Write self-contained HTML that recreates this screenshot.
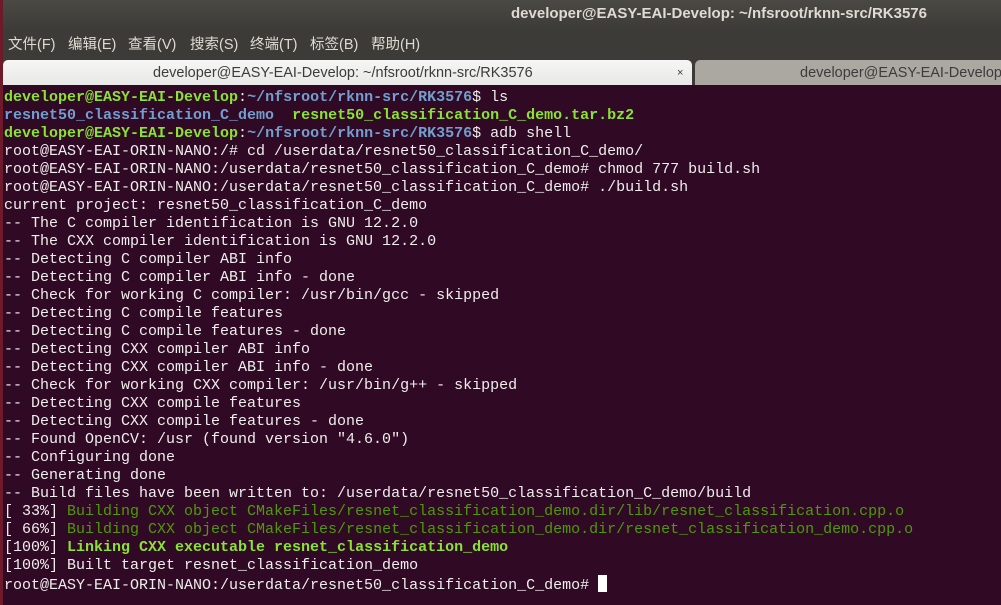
<!DOCTYPE html><html><head><meta charset="utf-8"><style>
body{margin:0;width:1001px;height:605px;overflow:hidden;background:#300a24;position:relative;font-family:"Liberation Sans","Noto Sans CJK SC",sans-serif}
#title{position:absolute;left:0;top:0;width:1001px;height:30px;background:linear-gradient(#4a4944,#3c3b37);color:#dfdbd2;font-weight:bold;font-size:15px;line-height:28px}
#title span{position:absolute;left:511px}
#menu{position:absolute;left:0;top:30px;width:1001px;height:30px;background:#3c3b37;color:#dfdbd2;font-size:14.5px;line-height:31px}
#menu span{position:absolute}
#tabs{position:absolute;left:0;top:59px;width:1001px;height:26px;background:#3c3b37}
.tab{position:absolute;top:1px;height:25px;border-radius:5px 5px 0 0;font-size:14.5px;line-height:26px}
#lb{position:absolute;left:0;top:0;width:3px;height:605px;background:#6e1a2a}
#term{position:absolute;left:4px;top:89px;font-family:"Liberation Mono",monospace;font-size:15px;line-height:18px;color:#eeeeec;white-space:pre}
.g{color:#8ae234;font-weight:bold}.b{color:#729fcf;font-weight:bold}.d{color:#4e9a06}
.cur{display:inline-block;width:9px;height:17px;background:#fff;vertical-align:-3px}
</style></head><body>
<div id="title"><span>developer@EASY-EAI-Develop: ~/nfsroot/rknn-src/RK3576</span></div>
<div id="menu"><span style="left:8px">文件(F)</span><span style="left:68px">编辑(E)</span><span style="left:128px">查看(V)</span><span style="left:190px">搜索(S)</span><span style="left:250px">终端(T)</span><span style="left:310px">标签(B)</span><span style="left:371px">帮助(H)</span></div>
<div id="tabs">
<div class="tab" style="left:3px;width:689px;background:linear-gradient(#f6f6f5,#e8e8e7);color:#3c3c3c"><span style="position:absolute;left:150px">developer@EASY-EAI-Develop: ~/nfsroot/rknn-src/RK3576</span><span style="position:absolute;left:674px;font-size:11px">×</span></div>
<div class="tab" style="left:695px;width:320px;background:#aba8a2;color:#3c3c3c"><span style="position:absolute;left:105px;white-space:nowrap">developer@EASY-EAI-Develop</span></div>
</div>
<div id="lb"></div>
<div id="term"><span class="g">developer@EASY-EAI-Develop</span>:<span class="b">~/nfsroot/rknn-src/RK3576</span>$ ls
<span class="b">resnet50_classification_C_demo</span>  <span class="g">resnet50_classification_C_demo.tar.bz2</span>
<span class="g">developer@EASY-EAI-Develop</span>:<span class="b">~/nfsroot/rknn-src/RK3576</span>$ adb shell
root@EASY-EAI-ORIN-NANO:/# cd /userdata/resnet50_classification_C_demo/
root@EASY-EAI-ORIN-NANO:/userdata/resnet50_classification_C_demo# chmod 777 build.sh
root@EASY-EAI-ORIN-NANO:/userdata/resnet50_classification_C_demo# ./build.sh
current project: resnet50_classification_C_demo
-- The C compiler identification is GNU 12.2.0
-- The CXX compiler identification is GNU 12.2.0
-- Detecting C compiler ABI info
-- Detecting C compiler ABI info - done
-- Check for working C compiler: /usr/bin/gcc - skipped
-- Detecting C compile features
-- Detecting C compile features - done
-- Detecting CXX compiler ABI info
-- Detecting CXX compiler ABI info - done
-- Check for working CXX compiler: /usr/bin/g++ - skipped
-- Detecting CXX compile features
-- Detecting CXX compile features - done
-- Found OpenCV: /usr (found version "4.6.0")
-- Configuring done
-- Generating done
-- Build files have been written to: /userdata/resnet50_classification_C_demo/build
[ 33%] <span class="d">Building CXX object CMakeFiles/resnet_classification_demo.dir/lib/resnet_classification.cpp.o</span>
[ 66%] <span class="d">Building CXX object CMakeFiles/resnet_classification_demo.dir/resnet_classification_demo.cpp.o</span>
[100%] <span class="g">Linking CXX executable resnet_classification_demo</span>
[100%] Built target resnet_classification_demo
root@EASY-EAI-ORIN-NANO:/userdata/resnet50_classification_C_demo# <span class="cur"></span></div>
</body></html>
